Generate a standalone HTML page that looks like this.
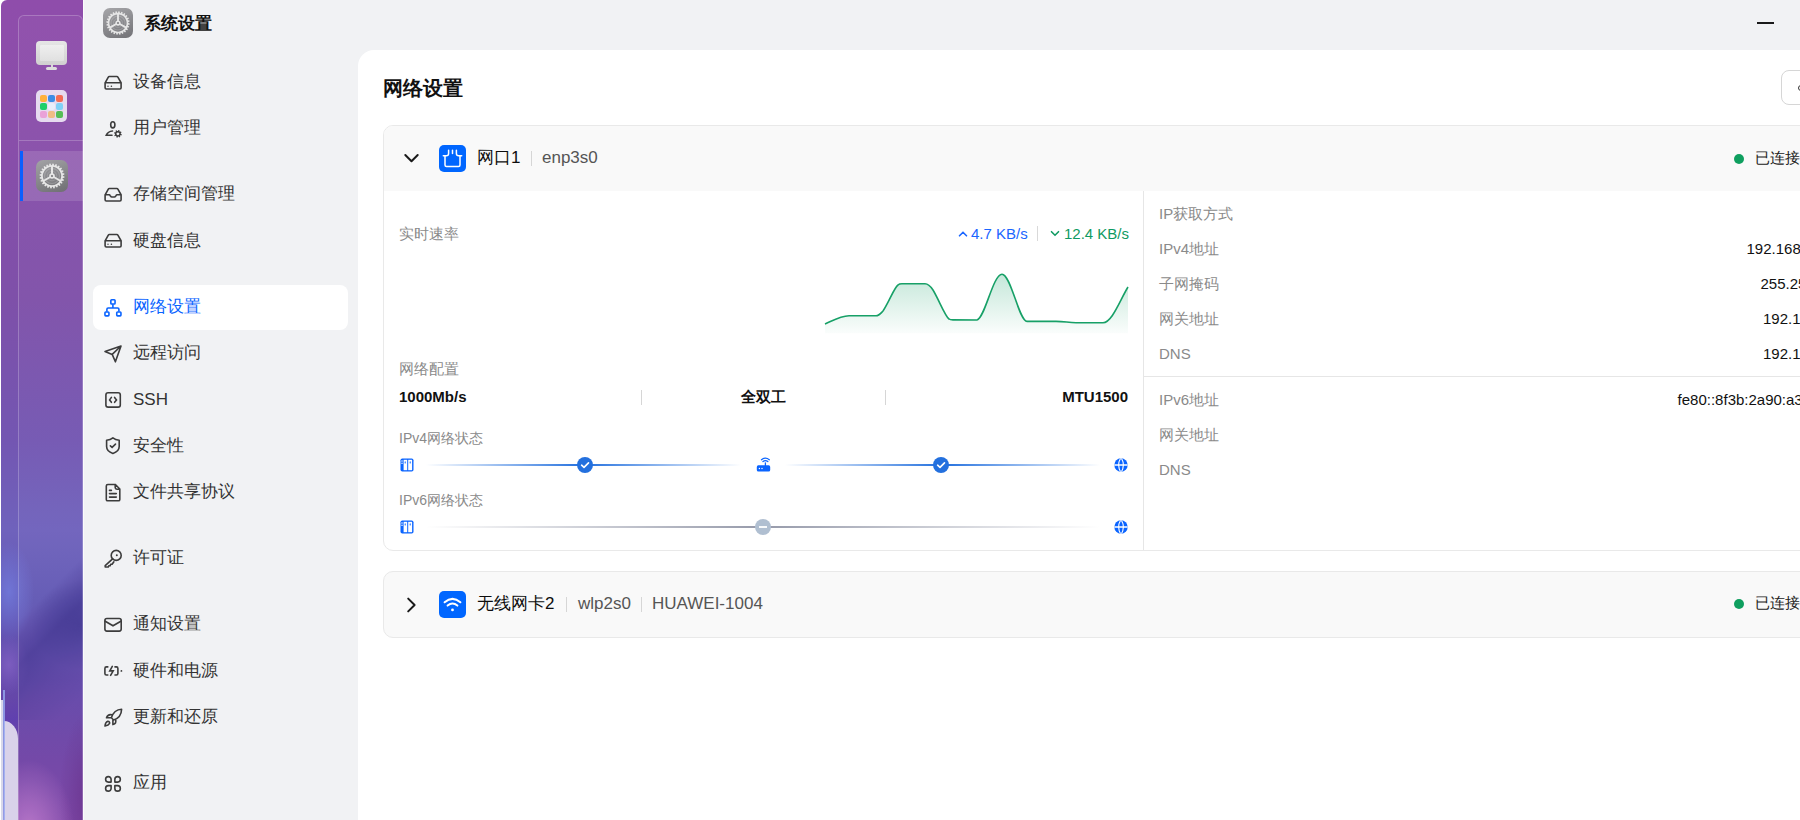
<!DOCTYPE html>
<html><head><meta charset="utf-8">
<style>
*{box-sizing:border-box;margin:0;padding:0}
html,body{width:1800px;height:820px;overflow:hidden;background:#fff;font-family:"Liberation Sans",sans-serif;color:#1f1f1f}
body{position:relative}
.abs{position:absolute;white-space:nowrap}
#dock{position:absolute;left:1px;top:0;width:83px;height:820px;border-top-left-radius:6px;overflow:hidden;
 background:radial-gradient(ellipse 50px 45px at 80px 625px,rgba(58,48,140,0.55),rgba(58,48,140,0)),radial-gradient(ellipse 25px 50px at 8px 592px,rgba(120,135,235,0.6),rgba(120,135,235,0)),radial-gradient(ellipse 20px 30px at 8px 665px,rgba(150,110,210,0.5),rgba(150,110,210,0)),radial-gradient(ellipse 45px 70px at 28px 830px,rgba(200,130,210,0.75),rgba(200,130,210,0)),radial-gradient(ellipse 30px 90px at 88px 800px,rgba(95,35,125,0.6),rgba(95,35,125,0)),linear-gradient(180deg,#8f4dab 0px,#8a4eaa 120px,#7e50a9 300px,#7356b2 440px,#6f62bc 530px,#6258b4 600px,#6248aa 680px,#7044a6 760px,#7a44a6 820px)}
#win{position:absolute;left:83px;top:0;width:1717px;height:820px;background:#f1f2f4}
#panel{position:absolute;left:358px;top:50px;width:1500px;height:800px;background:#fff;border-top-left-radius:16px}
.st{font-size:17px;line-height:24px;color:#333}
.big{font-size:17px;line-height:26px}
.md{font-size:15px;line-height:24px}
</style></head><body>
<div id="dock">
  <div class="abs" style="left:17px;top:520px;width:66px;height:200px;background:linear-gradient(135deg,rgba(55,42,135,0) 38%,rgba(55,42,135,0.5) 55%,rgba(55,42,135,0.2) 72%,rgba(55,42,135,0) 90%)"></div>
  <div class="abs" style="left:0px;top:690px;width:17px;height:50px;background:linear-gradient(160deg,rgba(90,60,180,0) 20%,rgba(90,60,180,0.6) 60%,rgba(90,60,180,0))"></div>
  <div class="abs" style="left:3px;top:721px;width:14px;height:120px;background:#d9d2ea;border-top-right-radius:16px 20px"></div>
  <div class="abs" style="left:2px;top:690px;width:1.5px;height:140px;background:rgba(150,170,240,0.8)"></div>
  <div class="abs" style="left:-1px;top:700px;width:3px;height:140px;background:#d8d8ea"></div>

  <div class="abs" style="left:17px;top:15px;width:65px;height:820px;border:1px solid rgba(255,255,255,0.22);border-radius:6px;background:rgba(255,255,255,0.03)"></div>
  <div class="abs" style="left:18px;top:140px;width:64px;height:1px;background:rgba(255,255,255,0.22)"></div>
  <div class="abs" style="left:19px;top:151px;width:63px;height:50px;background:rgba(255,255,255,0.13)"></div>
  <div class="abs" style="left:19px;top:151px;width:3px;height:50px;background:#0a5fff"></div>
  <!-- monitor -->
  <div class="abs" style="left:35px;top:41px;width:31px;height:23.5px;border-radius:4px;background:linear-gradient(180deg,#e6e6e6,#d0d0d0)"></div>
  <div class="abs" style="left:38.5px;top:44.5px;width:24px;height:16.5px;background:linear-gradient(180deg,#efefef,#e0e0e0);border-radius:1px"></div>
  <div class="abs" style="left:49.5px;top:64px;width:2px;height:4px;background:#d8d8d8"></div>
  <div class="abs" style="left:45px;top:67px;width:11px;height:3px;border-radius:1.5px;background:#dcdcdc"></div>
  <!-- grid -->
  <div class="abs" style="left:35px;top:90px;width:31px;height:32px;border-radius:5px;background:#e6dbef">
    <div class="abs" style="left:4px;top:5px;width:7px;height:7px;border-radius:2px;background:#ffb13b"></div>
    <div class="abs" style="left:12px;top:5px;width:7px;height:7px;border-radius:2px;background:#3b8de6"></div>
    <div class="abs" style="left:20px;top:5px;width:7px;height:7px;border-radius:2px;background:#f36d55"></div>
    <div class="abs" style="left:4px;top:13px;width:7px;height:7px;border-radius:2px;background:#1fcf6a"></div>
    <div class="abs" style="left:12px;top:13px;width:7px;height:7px;border-radius:2px;background:#e9eefa"></div>
    <div class="abs" style="left:20px;top:13px;width:7px;height:7px;border-radius:2px;background:#80d1f6"></div>
    <div class="abs" style="left:4px;top:21px;width:7px;height:7px;border-radius:2px;background:#eaa2d8"></div>
    <div class="abs" style="left:12px;top:21px;width:7px;height:7px;border-radius:2px;background:#efbc85"></div>
    <div class="abs" style="left:20px;top:21px;width:7px;height:7px;border-radius:2px;background:#55bd56"></div>
  </div>
  <!-- settings icon -->
  <div class="abs" style="left:35px;top:160px;width:32px;height:32px;border-radius:7px;background:linear-gradient(160deg,#a3a3a6,#6e6e72)">
    <svg width="32" height="32" viewBox="0 0 32 32" style="position:absolute;left:0;top:0">
<circle cx="16" cy="16" r="7.5" fill="none" stroke="rgba(255,255,255,.18)" stroke-width="1.2"/>
<circle cx="16" cy="16" r="4.8" fill="none" stroke="rgba(255,255,255,.15)" stroke-width="1"/>
<path d="M26.90,16.00 L28.49,16.49 L28.37,17.79 L26.72,17.99 L26.53,18.82 L27.94,19.71 L27.48,20.93 L25.84,20.69 L25.44,21.45 L26.57,22.67 L25.82,23.74 L24.29,23.08 L23.71,23.71 L24.49,25.18 L23.48,26.02 L22.17,24.98 L21.45,25.44 L21.82,27.06 L20.63,27.61 L19.64,26.27 L18.82,26.53 L18.76,28.19 L17.47,28.41 L16.86,26.87 L16.00,26.90 L15.51,28.49 L14.21,28.37 L14.01,26.72 L13.18,26.53 L12.29,27.94 L11.07,27.48 L11.31,25.84 L10.55,25.44 L9.33,26.57 L8.26,25.82 L8.92,24.29 L8.29,23.71 L6.82,24.49 L5.98,23.48 L7.02,22.17 L6.56,21.45 L4.94,21.82 L4.39,20.63 L5.73,19.64 L5.47,18.82 L3.81,18.76 L3.59,17.47 L5.13,16.86 L5.10,16.00 L3.51,15.51 L3.63,14.21 L5.28,14.01 L5.47,13.18 L4.06,12.29 L4.52,11.07 L6.16,11.31 L6.56,10.55 L5.43,9.33 L6.18,8.26 L7.71,8.92 L8.29,8.29 L7.51,6.82 L8.52,5.98 L9.83,7.02 L10.55,6.56 L10.18,4.94 L11.37,4.39 L12.36,5.73 L13.18,5.47 L13.24,3.81 L14.53,3.59 L15.14,5.13 L16.00,5.10 L16.49,3.51 L17.79,3.63 L17.99,5.28 L18.82,5.47 L19.71,4.06 L20.93,4.52 L20.69,6.16 L21.45,6.56 L22.67,5.43 L23.74,6.18 L23.08,7.71 L23.71,8.29 L25.18,7.51 L26.02,8.52 L24.98,9.83 L25.44,10.55 L27.06,10.18 L27.61,11.37 L26.27,12.36 L26.53,13.18 L28.19,13.24 L28.41,14.53 L26.87,15.14Z M16,6.8 A9.2,9.2 0 1 0 16.01,6.8 Z" fill="#e6e6e6" fill-rule="evenodd"/>
<path d="M16,6 V14 M16,16 L7.3,21 M16,16 L24.7,21" stroke="#e6e6e6" stroke-width="2"/>
<circle cx="16" cy="16" r="2.8" fill="#e6e6e6"/><circle cx="16" cy="16" r="1.1" fill="#7a7a7e"/>
</svg>
  </div>
</div>

<div id="win"></div>
<div class="abs" style="left:83px;top:0;width:1px;height:820px;background:#fbfbfc"></div>

<div class="abs" style="left:1757px;top:22px;width:17px;height:2px;background:#1a1a1a"></div>
<div class="abs" style="left:103px;top:8px;width:30px;height:30px;border-radius:7px;background:linear-gradient(160deg,#a6a6a9,#727276);overflow:hidden"><div style="transform:scale(0.9375);transform-origin:0 0;position:absolute;left:0;top:0;width:32px;height:32px"><svg width="32" height="32" viewBox="0 0 32 32" style="position:absolute;left:0;top:0">
<circle cx="16" cy="16" r="7.5" fill="none" stroke="rgba(255,255,255,.18)" stroke-width="1.2"/>
<circle cx="16" cy="16" r="4.8" fill="none" stroke="rgba(255,255,255,.15)" stroke-width="1"/>
<path d="M26.90,16.00 L28.49,16.49 L28.37,17.79 L26.72,17.99 L26.53,18.82 L27.94,19.71 L27.48,20.93 L25.84,20.69 L25.44,21.45 L26.57,22.67 L25.82,23.74 L24.29,23.08 L23.71,23.71 L24.49,25.18 L23.48,26.02 L22.17,24.98 L21.45,25.44 L21.82,27.06 L20.63,27.61 L19.64,26.27 L18.82,26.53 L18.76,28.19 L17.47,28.41 L16.86,26.87 L16.00,26.90 L15.51,28.49 L14.21,28.37 L14.01,26.72 L13.18,26.53 L12.29,27.94 L11.07,27.48 L11.31,25.84 L10.55,25.44 L9.33,26.57 L8.26,25.82 L8.92,24.29 L8.29,23.71 L6.82,24.49 L5.98,23.48 L7.02,22.17 L6.56,21.45 L4.94,21.82 L4.39,20.63 L5.73,19.64 L5.47,18.82 L3.81,18.76 L3.59,17.47 L5.13,16.86 L5.10,16.00 L3.51,15.51 L3.63,14.21 L5.28,14.01 L5.47,13.18 L4.06,12.29 L4.52,11.07 L6.16,11.31 L6.56,10.55 L5.43,9.33 L6.18,8.26 L7.71,8.92 L8.29,8.29 L7.51,6.82 L8.52,5.98 L9.83,7.02 L10.55,6.56 L10.18,4.94 L11.37,4.39 L12.36,5.73 L13.18,5.47 L13.24,3.81 L14.53,3.59 L15.14,5.13 L16.00,5.10 L16.49,3.51 L17.79,3.63 L17.99,5.28 L18.82,5.47 L19.71,4.06 L20.93,4.52 L20.69,6.16 L21.45,6.56 L22.67,5.43 L23.74,6.18 L23.08,7.71 L23.71,8.29 L25.18,7.51 L26.02,8.52 L24.98,9.83 L25.44,10.55 L27.06,10.18 L27.61,11.37 L26.27,12.36 L26.53,13.18 L28.19,13.24 L28.41,14.53 L26.87,15.14Z M16,6.8 A9.2,9.2 0 1 0 16.01,6.8 Z" fill="#e6e6e6" fill-rule="evenodd"/>
<path d="M16,6 V14 M16,16 L7.3,21 M16,16 L24.7,21" stroke="#e6e6e6" stroke-width="2"/>
<circle cx="16" cy="16" r="2.8" fill="#e6e6e6"/><circle cx="16" cy="16" r="1.1" fill="#7a7a7e"/>
</svg></div></div>
<div class="abs" style="left:143.5px;top:8.5px;font-size:17px;font-weight:bold;line-height:30px;color:#111">系统设置</div>
<div class="abs" style="left:93px;top:285px;width:255px;height:45px;background:#fff;border-radius:8px"></div>
<svg class="abs" style="left:100px;top:70px" width="26" height="26" viewBox="0 0 26 26" fill="none" stroke="#3c3c3c" stroke-width="1.6" stroke-linecap="round"><path d="M5.1,12.8 L8.3,7.2 Q8.6,6.5 9.4,6.5 L16.8,6.5 Q17.6,6.5 17.9,7.2 L21.1,12.8 V17.8 Q21.1,19 19.9,19 H6.3 Q5.1,19 5.1,17.8 Z M5.1,12.8 H21.1"/><circle cx="8" cy="16.2" r="0.7" fill="#3c3c3c" stroke="none"/><circle cx="11.4" cy="16.2" r="0.8" fill="#3c3c3c" stroke="none"/></svg>
<div class="abs st" style="left:133px;top:70px;color:#333">设备信息</div>
<svg class="abs" style="left:100px;top:116px" width="26" height="26" viewBox="0 0 26 26" fill="none" stroke="#3c3c3c" stroke-width="1.6" stroke-linecap="round"><ellipse cx="12.8" cy="8.8" rx="2.1" ry="3.1"/><path d="M12.5,15 Q8,15.4 6.3,19.2 H12"/><path d="M17.90,14.90 L18.36,13.93 L19.53,14.26 L19.42,15.33 L19.95,15.75 L20.96,15.39 L21.56,16.45 L20.72,17.12 L20.80,17.80 L21.77,18.26 L21.44,19.43 L20.37,19.32 L19.95,19.85 L20.31,20.86 L19.25,21.46 L18.58,20.62 L17.90,20.70 L17.44,21.67 L16.27,21.34 L16.38,20.27 L15.85,19.85 L14.84,20.21 L14.24,19.15 L15.08,18.48 L15.00,17.80 L14.03,17.34 L14.36,16.17 L15.43,16.28 L15.85,15.75 L15.49,14.74 L16.55,14.14 L17.22,14.98Z M17.9,16.4 A1.4,1.4 0 1 0 17.91,16.4 Z" fill="#3c3c3c" fill-rule="evenodd" stroke="none"/></svg>
<div class="abs st" style="left:133px;top:116.4px;color:#333">用户管理</div>
<svg class="abs" style="left:100px;top:182px" width="26" height="26" viewBox="0 0 26 26" fill="none" stroke="#3c3c3c" stroke-width="1.6" stroke-linecap="round"><path d="M5.1,12.8 L8.3,7.2 Q8.6,6.5 9.4,6.5 L16.8,6.5 Q17.6,6.5 17.9,7.2 L21.1,12.8 V17.8 Q21.1,19 19.9,19 H6.3 Q5.1,19 5.1,17.8 Z M5.1,12.8 H9.1 Q9.8,12.8 10.2,13.6 L10.6,14.2 Q11,15 11.8,15 H14.4 Q15.2,15 15.6,14.2 L16,13.6 Q16.4,12.8 17.1,12.8 H21.1"/></svg>
<div class="abs st" style="left:133px;top:182.4px;color:#333">存储空间管理</div>
<svg class="abs" style="left:100px;top:228px" width="26" height="26" viewBox="0 0 26 26" fill="none" stroke="#3c3c3c" stroke-width="1.6" stroke-linecap="round"><path d="M5.1,12.8 L8.3,7.2 Q8.6,6.5 9.4,6.5 L16.8,6.5 Q17.6,6.5 17.9,7.2 L21.1,12.8 V17.8 Q21.1,19 19.9,19 H6.3 Q5.1,19 5.1,17.8 Z M5.1,12.8 H21.1"/><circle cx="8" cy="16.2" r="0.7" fill="#3c3c3c" stroke="none"/><circle cx="11.4" cy="16.2" r="0.8" fill="#3c3c3c" stroke="none"/></svg>
<div class="abs st" style="left:133px;top:228.8px;color:#333">硬盘信息</div>
<svg class="abs" style="left:100px;top:294px" width="26" height="26" viewBox="0 0 26 26" fill="none" stroke="#0a64ff" stroke-width="1.6" stroke-linecap="round"><rect x="10.85" y="5.75" width="4.2" height="4.2" rx="0.8"/><rect x="4.95" y="17.95" width="4" height="3.9" rx="0.8"/><rect x="16.75" y="17.95" width="4.2" height="3.9" rx="0.8"/><path d="M12.9,10.8 V14 M6.9,17.1 V15.2 Q6.9,14 8.1,14 H17.7 Q18.9,14 18.9,15.2 V17.1"/></svg>
<div class="abs st" style="left:133px;top:294.8px;color:#0a64ff">网络设置</div>
<svg class="abs" style="left:100px;top:340px" width="26" height="26" viewBox="0 0 26 26" fill="none" stroke="#3c3c3c" stroke-width="1.6" stroke-linecap="round"><path d="M21,6 L5,11.5 L12.2,14.4 L15.4,21.8 Z M12.2,14.4 L21,6" stroke-linejoin="round"/></svg>
<div class="abs st" style="left:133px;top:341.2px;color:#333">远程访问</div>
<svg class="abs" style="left:100px;top:386px" width="26" height="26" viewBox="0 0 26 26" fill="none" stroke="#3c3c3c" stroke-width="1.6" stroke-linecap="round"><rect x="5.9" y="6.7" width="14.4" height="14.4" rx="2.2"/><path d="M11.4,11.4 L9.6,13.9 L11.4,16.3 M14.6,11.4 L16.5,13.9 L14.6,16.3"/></svg>
<div class="abs st" style="left:133px;top:387.6px;color:#333">SSH</div>
<svg class="abs" style="left:100px;top:432px" width="26" height="26" viewBox="0 0 26 26" fill="none" stroke="#3c3c3c" stroke-width="1.6" stroke-linecap="round"><path d="M12.9,5.9 Q10.5,7.8 6.6,8.2 V14.5 Q6.6,19.3 12.9,21.5 Q19.2,19.3 19.2,14.5 V8.2 Q15.3,7.8 12.9,5.9 Z" stroke-linejoin="round"/><path d="M10.4,13.8 L12.1,15.3 L15.5,12.1"/></svg>
<div class="abs st" style="left:133px;top:434px;color:#333">安全性</div>
<svg class="abs" style="left:100px;top:478px" width="26" height="26" viewBox="0 0 26 26" fill="none" stroke="#3c3c3c" stroke-width="1.6" stroke-linecap="round"><path d="M7.9,6.5 H15.4 L19.8,11 V21.4 Q19.8,22.8 18.4,22.8 H7.7 Q6.3,22.8 6.3,21.4 V7.9 Q6.3,6.5 7.9,6.5 Z M15.2,6.6 V9.6 Q15.2,11.2 16.8,11.2 H19.7 M9.5,12.4 H11.4 M9.5,15.6 H16.3 M9.5,19.1 H16.3"/></svg>
<div class="abs st" style="left:133px;top:480.4px;color:#333">文件共享协议</div>
<svg class="abs" style="left:100px;top:544px" width="26" height="26" viewBox="0 0 26 26" fill="none" stroke="#3c3c3c" stroke-width="1.6" stroke-linecap="round"><circle cx="16.2" cy="11.4" r="5"/><path d="M12.6,14.8 L5.2,21.6 V23 H8.3 L8.8,21.7 H10.2 L10.7,20.3 H12.1 L13.9,17.8" stroke-linejoin="round"/><circle cx="16.8" cy="11.2" r="1" fill="#3c3c3c" stroke="none"/></svg>
<div class="abs st" style="left:133px;top:546.4px;color:#333">许可证</div>
<svg class="abs" style="left:100px;top:611px" width="26" height="26" viewBox="0 0 26 26" fill="none" stroke="#3c3c3c" stroke-width="1.6" stroke-linecap="round"><rect x="4.9" y="7.5" width="16.3" height="12.6" rx="2"/><path d="M5.2,10.2 L13,14.8 L20.9,10.2"/></svg>
<div class="abs st" style="left:133px;top:612.4px;color:#333">通知设置</div>
<svg class="abs" style="left:100px;top:657px" width="26" height="26" viewBox="0 0 26 26" fill="none" stroke="#3c3c3c" stroke-width="1.6" stroke-linecap="round"><path d="M7.8,9.9 H6.4 Q4.9,9.9 4.9,11.4 V16.5 Q4.9,18 6.4,18 H7.8 M15,9.9 H16.4 Q17.9,9.9 17.9,11.4 V16.5 Q17.9,18 16.4,18 H15 M12.3,9.4 L9.8,13.9 H13.2 L10.6,18.4"/><circle cx="21.4" cy="13.9" r="0.9" fill="#3c3c3c" stroke="none"/></svg>
<div class="abs st" style="left:133px;top:658.8px;color:#333">硬件和电源</div>
<svg class="abs" style="left:100px;top:703px" width="26" height="26" viewBox="0 0 26 26" fill="none" stroke="#3c3c3c" stroke-width="1.6" stroke-linecap="round"><path d="M21.6,6.2 Q14,6.4 11.4,14.8 L13.6,17 Q21.4,14.4 21.6,6.2 Z M11.9,11.8 Q8,10.8 6.5,14.7 H11.2 M15.6,16.4 Q16.8,20.4 12.9,21.6 V17.2 M5,23 Q5.3,19.2 7.8,18.3 Q10,18.5 9.6,20.4 Q8.5,22.4 5,23 Z" stroke-linejoin="round"/></svg>
<div class="abs st" style="left:133px;top:705.2px;color:#333">更新和还原</div>
<svg class="abs" style="left:100px;top:769px" width="26" height="26" viewBox="0 0 26 26" fill="none" stroke="#3c3c3c" stroke-width="1.6" stroke-linecap="round"><path d="M11.1,13.1 V10.35 A2.75,2.75 0 1 0 8.35,13.1 Z M14.85,13.1 V10.35 A2.75,2.75 0 1 1 17.6,13.1 Z M11.1,16.65 H8.35 A2.75,2.75 0 1 0 11.1,19.4 Z M14.85,16.65 H17.6 A2.75,2.75 0 1 1 14.85,19.4 Z" stroke-linejoin="round"/></svg>
<div class="abs st" style="left:133px;top:771.2px;color:#333">应用</div>
<div id="panel"></div>
<div class="abs" style="left:383px;top:74px;font-size:20px;font-weight:bold;line-height:28px;color:#111">网络设置</div>
<div class="abs" style="left:1781px;top:70px;width:40px;height:35px;border:1px solid #d6d6d6;border-radius:8px"></div>
<div class="abs" style="left:1797.5px;top:84.5px;width:6px;height:6px;border:1.8px solid #333;border-radius:50%"></div>

<!-- card 1 -->
<div class="abs" style="left:383px;top:125px;width:1500px;height:426px;border:1px solid #e9e9e9;border-radius:10px;background:#fff;overflow:hidden">
  <div class="abs" style="left:0;top:0;width:1500px;height:65px;background:#f9f9f9"></div>
  <div class="abs" style="left:759px;top:65px;width:1px;height:361px;background:#e6e6e6"></div>
  <div class="abs" style="left:759px;top:250px;width:800px;height:1px;background:#e6e6e6"></div>
</div>
<svg class="abs" style="left:403px;top:152px" width="18" height="12" viewBox="0 0 18 12"><path d="M2.3,3 L8.5,9.2 L14.7,3" fill="none" stroke="#1a1a1a" stroke-width="2" stroke-linecap="round" stroke-linejoin="round"/></svg>
<div class="abs" style="left:439px;top:145px;width:27px;height:27px;border-radius:5px;background:#0066ff">
 <svg width="27" height="27" viewBox="0 0 27 27" style="position:absolute;left:0;top:0"><path d="M9.6,5.3 V8.4 Q9.6,10.7 7.3,10.7 H4.3 M17.4,5.3 V8.4 Q17.4,10.7 19.7,10.7 H22.7 M13.5,5.3 V8.6 M6,10.9 V19.9 Q6,21.4 7.5,21.4 H19.5 Q21,21.4 21,19.9 V10.9" fill="none" stroke="#fff" stroke-width="1.5" stroke-linecap="round"/></svg>
</div>
<div class="abs big" style="left:477px;top:145px;color:#0d0d0d">网口1</div>
<div class="abs" style="left:531px;top:151px;width:1px;height:15px;background:#d6d6d6"></div>
<div class="abs big" style="left:542px;top:145px;color:#555">enp3s0</div>
<div class="abs" style="left:1734px;top:154px;width:10px;height:10px;border-radius:50%;background:#0f9f5f"></div>
<div class="abs md" style="left:1755px;top:146px;color:#222">已连接</div>

<div class="abs md" style="left:399px;top:222px;color:#8a8a8a">实时速率</div>
<svg class="abs" style="left:957px;top:229px" width="12" height="9" viewBox="0 0 12 9"><path d="M2.5,6.8 L6,3.3 L9.5,6.8" fill="none" stroke="#1a66ff" stroke-width="1.6" stroke-linecap="round"/></svg>
<div class="abs md" style="left:971px;top:222px;color:#1a66ff">4.7 KB/s</div>
<div class="abs" style="left:1037px;top:226px;width:1px;height:15px;background:#d9d9d9"></div>
<svg class="abs" style="left:1049px;top:229px" width="12" height="9" viewBox="0 0 12 9"><path d="M2.5,2.7 L6,6.2 L9.5,2.7" fill="none" stroke="#0f9a62" stroke-width="1.6" stroke-linecap="round"/></svg>
<div class="abs md" style="left:1064px;top:222px;color:#0f9a62">12.4 KB/s</div>
<svg class="abs" style="left:820px;top:265px" width="315" height="75" viewBox="0 0 315 75">
 <defs><linearGradient id="g1" x1="0" y1="0" x2="0" y2="1"><stop offset="0" stop-color="#16a068" stop-opacity="0.25"/><stop offset="1" stop-color="#16a068" stop-opacity="0.02"/></linearGradient></defs>
 <path d="M5,59 C15,54.5 21,51 29,50.8 L56,50.8 C59,50.8 61,48 63,46 C69,37 74,23 78,20 C79,19 80,18.8 82,18.8 L105,18.8 C108,18.8 111,22 113,25 C119,35 125,51 129,54 C130,54.9 131,54.9 133,54.9 L157,55 C165,53 173,9.2 182,9.2 C191,9.2 199,56.4 207,56.4 L236,56.4 C245,56.4 248,57.7 256,57.7 L283,57.7 C292,57.7 300,35 308,22 V68.3 H5 Z" fill="url(#g1)"/>
 <path d="M5,59 C15,54.5 21,51 29,50.8 L56,50.8 C59,50.8 61,48 63,46 C69,37 74,23 78,20 C79,19 80,18.8 82,18.8 L105,18.8 C108,18.8 111,22 113,25 C119,35 125,51 129,54 C130,54.9 131,54.9 133,54.9 L157,55 C165,53 173,9.2 182,9.2 C191,9.2 199,56.4 207,56.4 L236,56.4 C245,56.4 248,57.7 256,57.7 L283,57.7 C292,57.7 300,35 308,22" fill="none" stroke="#17a067" stroke-width="1.6"/>
</svg>

<div class="abs md" style="left:399px;top:357px;color:#8a8a8a">网络配置</div>
<div class="abs md" style="left:399px;top:385px;font-weight:bold;color:#111">1000Mb/s</div>
<div class="abs" style="left:641px;top:390px;width:1px;height:15px;background:#d6d6d6"></div>
<div class="abs md" style="left:641px;width:244px;text-align:center;top:385px;font-weight:bold;color:#111">全双工</div>
<div class="abs" style="left:885px;top:390px;width:1px;height:15px;background:#d6d6d6"></div>
<div class="abs md" style="left:885px;width:243px;text-align:right;top:385px;font-weight:bold;color:#111">MTU1500</div>

<div class="abs" style="left:399px;top:426px;font-size:14px;line-height:24px;color:#8a8a8a">IPv4网络状态</div>
<div class="abs" style="left:399px;top:488px;font-size:14px;line-height:24px;color:#8a8a8a">IPv6网络状态</div>
<svg class="abs" style="left:400px;top:458px" width="14" height="14" viewBox="0 0 14 14"><rect x="0.5" y="0.5" width="13" height="13" rx="1.8" fill="#0a64ff"/><rect x="3.6" y="1.8" width="3.6" height="10.4" fill="#fff"/><rect x="8.2" y="1.8" width="3.9" height="10.4" fill="#fff"/><circle cx="2" cy="3" r="0.75" fill="#fff"/><circle cx="2" cy="5.2" r="0.75" fill="#fff"/><ellipse cx="5.2" cy="4.4" rx="0.5" ry="1.2" fill="#0a64ff"/><ellipse cx="10.2" cy="4.4" rx="0.5" ry="1.2" fill="#0a64ff"/></svg>
<div class="abs" style="left:426px;top:464px;width:315px;height:2px;background:linear-gradient(90deg,rgba(35,112,222,0) 0%,rgba(35,112,222,1) 50%,rgba(35,112,222,0) 100%)"></div>
<div class="abs" style="left:785px;top:464px;width:315px;height:2px;background:linear-gradient(90deg,rgba(35,112,222,0) 0%,rgba(35,112,222,1) 50%,rgba(35,112,222,0) 100%)"></div>
<svg class="abs" style="left:577px;top:457px" width="16" height="16" viewBox="0 0 16 16"><circle cx="8" cy="8" r="8" fill="#2370de"/><path d="M4.6,8.2 L7,10.4 L11.5,5.9" fill="none" stroke="#fff" stroke-width="1.6" stroke-linecap="round" stroke-linejoin="round"/></svg>
<svg class="abs" style="left:756px;top:457px" width="15" height="15" viewBox="0 0 15 15"><rect x="0.8" y="8.3" width="13.4" height="6.2" rx="1.6" fill="#0a64ff"/><path d="M9.4,5.8 V8.5" stroke="#0a64ff" stroke-width="1.3" stroke-linecap="round"/><path d="M5.5,2.7 Q9.4,-0.3 13.3,2.7 M7,4.5 Q9.4,2.6 11.8,4.5" fill="none" stroke="#0a64ff" stroke-width="1.3" stroke-linecap="round"/><circle cx="3.4" cy="11.5" r="0.7" fill="#fff"/><circle cx="6" cy="11.5" r="0.7" fill="#fff"/></svg>
<svg class="abs" style="left:933px;top:457px" width="16" height="16" viewBox="0 0 16 16"><circle cx="8" cy="8" r="8" fill="#2370de"/><path d="M4.6,8.2 L7,10.4 L11.5,5.9" fill="none" stroke="#fff" stroke-width="1.6" stroke-linecap="round" stroke-linejoin="round"/></svg>
<svg class="abs" style="left:1113.5px;top:457.5px" width="14" height="14" viewBox="0 0 14 14"><clipPath id="c1113457"><circle cx="7" cy="7" r="6.7"/></clipPath><g clip-path="url(#c1113457)"><rect width="14" height="14" fill="#0a64ff"/><path d="M0,7 H14" stroke="#fff" stroke-width="1.3"/><path d="M7,-0.5 Q2.3,7 7,14.5 M7,-0.5 Q11.7,7 7,14.5" fill="none" stroke="#fff" stroke-width="1.1"/></g></svg>
<svg class="abs" style="left:400px;top:520px" width="14" height="14" viewBox="0 0 14 14"><rect x="0.5" y="0.5" width="13" height="13" rx="1.8" fill="#0a64ff"/><rect x="3.6" y="1.8" width="3.6" height="10.4" fill="#fff"/><rect x="8.2" y="1.8" width="3.9" height="10.4" fill="#fff"/><circle cx="2" cy="3" r="0.75" fill="#fff"/><circle cx="2" cy="5.2" r="0.75" fill="#fff"/><ellipse cx="5.2" cy="4.4" rx="0.5" ry="1.2" fill="#0a64ff"/><ellipse cx="10.2" cy="4.4" rx="0.5" ry="1.2" fill="#0a64ff"/></svg>
<div class="abs" style="left:426px;top:526px;width:674px;height:2px;background:linear-gradient(90deg,rgba(150,154,170,0) 0%,rgba(150,154,170,1) 50%,rgba(150,154,170,0) 100%)"></div>
<svg class="abs" style="left:755px;top:519px" width="16" height="16" viewBox="0 0 16 16"><circle cx="8" cy="8" r="8" fill="#b0bfd1"/><rect x="4" y="7.1" width="8" height="1.8" fill="#fff"/></svg>
<svg class="abs" style="left:1113.5px;top:520px" width="14" height="14" viewBox="0 0 14 14"><clipPath id="c1113520"><circle cx="7" cy="7" r="6.7"/></clipPath><g clip-path="url(#c1113520)"><rect width="14" height="14" fill="#0a64ff"/><path d="M0,7 H14" stroke="#fff" stroke-width="1.3"/><path d="M7,-0.5 Q2.3,7 7,14.5 M7,-0.5 Q11.7,7 7,14.5" fill="none" stroke="#fff" stroke-width="1.1"/></g></svg>
<div class="abs md" style="left:1159px;top:202px;color:#8a8a8a">IP获取方式</div>
<div class="abs md" style="left:1159px;top:237px;color:#8a8a8a">IPv4地址</div>
<div class="abs md" style="left:1746.5px;top:237px;color:#111">192.168.3.12</div>
<div class="abs md" style="left:1159px;top:272px;color:#8a8a8a">子网掩码</div>
<div class="abs md" style="left:1760.5px;top:272px;color:#111">255.255.255.0</div>
<div class="abs md" style="left:1159px;top:307px;color:#8a8a8a">网关地址</div>
<div class="abs md" style="left:1763px;top:307px;color:#111">192.168.3.1</div>
<div class="abs md" style="left:1159px;top:342px;color:#8a8a8a">DNS</div>
<div class="abs md" style="left:1763px;top:342px;color:#111">192.168.3.1</div>
<div class="abs md" style="left:1159px;top:388px;color:#8a8a8a">IPv6地址</div>
<div class="abs md" style="left:1677.6px;top:388px;color:#111">fe80::8f3b:2a90:a3c1:5e21</div>
<div class="abs md" style="left:1159px;top:423px;color:#8a8a8a">网关地址</div>
<div class="abs md" style="left:1159px;top:458px;color:#8a8a8a">DNS</div>

<!-- card 2 -->
<div class="abs" style="left:383px;top:571px;width:1500px;height:67px;border:1px solid #e9e9e9;border-radius:10px;background:#f9f9f9"></div>
<svg class="abs" style="left:405px;top:596px" width="14" height="18" viewBox="0 0 14 18"><path d="M3.2,2.6 L9.6,9 L3.2,15.4" fill="none" stroke="#1a1a1a" stroke-width="2" stroke-linecap="round" stroke-linejoin="round"/></svg>
<div class="abs" style="left:439px;top:591px;width:27px;height:27px;border-radius:5px;background:#0066ff">
 <svg width="27" height="27" viewBox="0 0 27 27" style="position:absolute;left:0;top:0"><path d="M5.6,11.3 Q13.5,4.5 21.4,11.3 M8.6,14.6 Q13.5,10.3 18.4,14.6" fill="none" stroke="#fff" stroke-width="2" stroke-linecap="round"/><circle cx="13.5" cy="18.9" r="1.4" fill="#fff"/></svg>
</div>
<div class="abs big" style="left:477px;top:591px;color:#0d0d0d">无线网卡2</div>
<div class="abs" style="left:566px;top:597px;width:1px;height:15px;background:#d6d6d6"></div>
<div class="abs big" style="left:578px;top:591px;color:#555">wlp2s0</div>
<div class="abs" style="left:641px;top:597px;width:1px;height:15px;background:#d6d6d6"></div>
<div class="abs big" style="left:652px;top:591px;color:#555">HUAWEI-1004</div>
<div class="abs" style="left:1734px;top:599px;width:10px;height:10px;border-radius:50%;background:#0f9f5f"></div>
<div class="abs md" style="left:1755px;top:591px;color:#222">已连接</div>

</body></html>
